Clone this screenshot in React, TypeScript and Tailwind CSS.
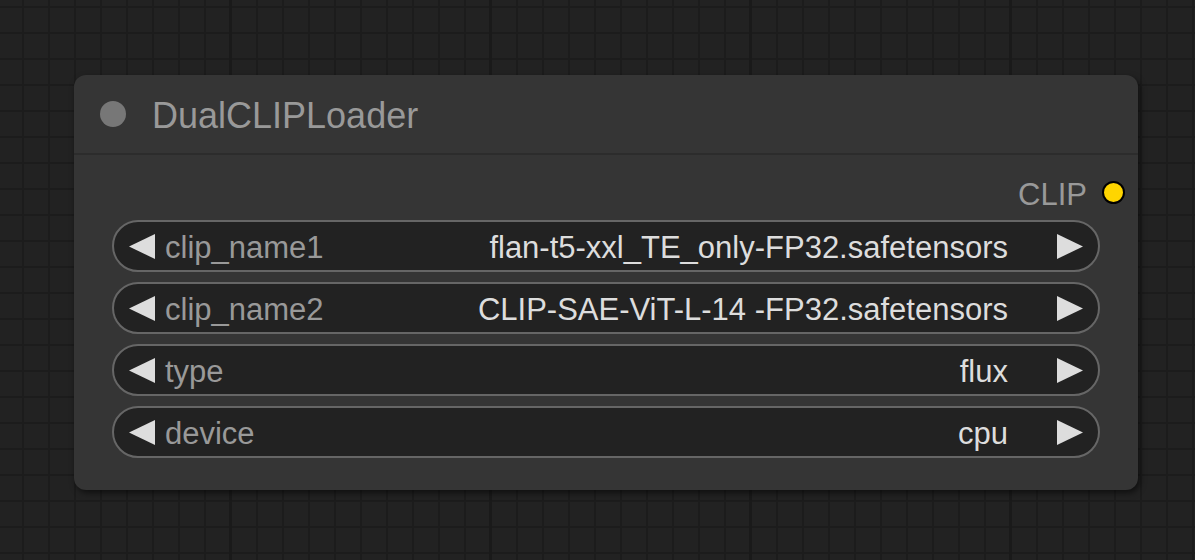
const widgets = [
  { label: 'clip_name1', value: 'flan-t5-xxl_TE_only-FP32.safetensors' },
  { label: 'clip_name2', value: 'CLIP-SAE-ViT-L-14 -FP32.safetensors' },
  { label: 'type', value: 'flux' },
  { label: 'device', value: 'cpu' },
];

const Arrow = ({ dir }: { dir: 'left' | 'right' }) => (
  <svg width="26" height="25" viewBox="0 0 26 25" className="shrink-0">
    {dir === 'left' ? (
      <polygon points="26,0 26,25 0,12.5" fill="#dddddd" />
    ) : (
      <polygon points="0,0 0,25 26,12.5" fill="#dddddd" />
    )}
  </svg>
);

const ComboWidget = ({ label, value }: { label: string; value: string }) => (
  <div className="flex h-[52px] items-center rounded-full border-2 border-[#666666] bg-[#222222] pl-[15px] pr-[15px]">
    <Arrow dir="left" />
    <span className="ml-[10px] pt-[3px] text-[31px] leading-none text-[#999999]">{label}</span>
    <span className="ml-auto pt-[3px] text-[31px] leading-none text-[#dddddd]">{value}</span>
    <span className="ml-[49px] flex">
      <Arrow dir="right" />
    </span>
  </div>
);

export default function App() {
  return (
    <div
      className="h-[560px] w-full overflow-hidden bg-[#222222] font-['Liberation_Sans',Arial,sans-serif] pl-[74px] pt-[75px] [background-image:linear-gradient(90deg,#1a1a1a_3px,transparent_3px),linear-gradient(90deg,#1c1c1c_2px,transparent_2px),linear-gradient(0deg,#1c1c1c_2px,transparent_2px)] [background-size:260px_260px,26px_26px,26px_26px] [background-position:229px_0,22px_0,0_8px]"
    >
      <div className="w-[1064px] h-[415px] rounded-[12px] bg-[#353535] shadow-[2px_3px_6px_rgba(0,0,0,0.55)]">
        {/* title bar */}
        <div className="flex h-[80px] items-center border-b-2 border-[#2c2c2c] pl-[26px]">
          <div className="h-[26px] w-[26px] rounded-full bg-[#777777]" />
          <span className="ml-[26px] pt-[4px] text-[36px] leading-none text-[#999999]">DualCLIPLoader</span>
        </div>

        {/* output slot */}
        <div className="flex h-[65px] items-center justify-end pr-[13px] pt-[10px]">
          <span className="pt-[3px] text-[31px] leading-none text-[#999999]">CLIP</span>
          <div className="ml-[15px] h-[23px] w-[23px] rounded-full border-2 border-black bg-[#ffd500]" />
        </div>

        {/* widgets */}
        <div className="flex flex-col gap-[10px] px-[38px]">
          {widgets.map((w) => (
            <ComboWidget key={w.label} label={w.label} value={w.value} />
          ))}
        </div>
      </div>
    </div>
  );
}
